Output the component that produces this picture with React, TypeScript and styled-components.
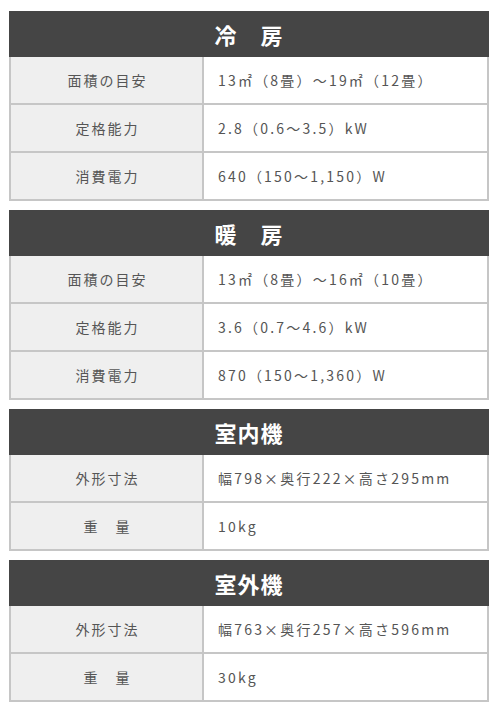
import React from "react";
import styled, { createGlobalStyle } from "styled-components";

const Global = createGlobalStyle`
  html, body {
    margin: 0;
    padding: 0;
    background: #ffffff;
  }
  body {
    font-family: "Noto Sans CJK JP", "Noto Sans", sans-serif;
  }
`;

const Page = styled.div`
  display: flex;
  flex-direction: column;
  gap: 9px;
  padding: 11px 0 0 9px;
  width: 480px;
`;

const Table = styled.section`
  display: flex;
  flex-direction: column;
  width: 480px;
`;

const Header = styled.h2`
  margin: 0;
  height: 46px;
  background: #454545;
  color: #ffffff;
  display: flex;
  align-items: center;
  justify-content: center;
  font-size: 22px;
  font-weight: 700;
  letter-spacing: 1px;
  line-height: 1;
`;

const Body = styled.div`
  border: 2px solid #c6c6c6;
  border-top: none;
  display: flex;
  flex-direction: column;
`;

const Row = styled.div`
  display: grid;
  grid-template-columns: 193px 1fr;
  height: 48px;
  box-sizing: border-box;
  border-bottom: 2px solid #c6c6c6;
  &:last-child {
    height: 46px;
    border-bottom: none;
  }
`;

const Label = styled.div`
  background: #efefef;
  border-right: 2px solid #c6c6c6;
  display: flex;
  align-items: center;
  justify-content: center;
  color: #555555;
  font-size: 14px;
  letter-spacing: 2px;
  padding-left: 2px;
`;

const Value = styled.div`
  background: #ffffff;
  display: flex;
  align-items: center;
  padding-left: 14px;
  color: #555555;
  font-size: 14px;
  letter-spacing: 2.2px;
`;

type Spec = { title: string; rows: [string, string][] };

const specs: Spec[] = [
  {
    title: "冷　房",
    rows: [
      ["面積の目安", "13㎡（8畳）～19㎡（12畳）"],
      ["定格能力", "2.8（0.6～3.5）kW"],
      ["消費電力", "640（150～1,150）W"],
    ],
  },
  {
    title: "暖　房",
    rows: [
      ["面積の目安", "13㎡（8畳）～16㎡（10畳）"],
      ["定格能力", "3.6（0.7～4.6）kW"],
      ["消費電力", "870（150～1,360）W"],
    ],
  },
  {
    title: "室内機",
    rows: [
      ["外形寸法", "幅798×奥行222×高さ295mm"],
      ["重　量", "10kg"],
    ],
  },
  {
    title: "室外機",
    rows: [
      ["外形寸法", "幅763×奥行257×高さ596mm"],
      ["重　量", "30kg"],
    ],
  },
];

export default function App() {
  return (
    <>
      <Global />
      <Page>
        {specs.map((s) => (
          <Table key={s.title}>
            <Header>{s.title}</Header>
            <Body>
              {s.rows.map(([l, v]) => (
                <Row key={l}>
                  <Label>{l}</Label>
                  <Value>{v}</Value>
                </Row>
              ))}
            </Body>
          </Table>
        ))}
      </Page>
    </>
  );
}
